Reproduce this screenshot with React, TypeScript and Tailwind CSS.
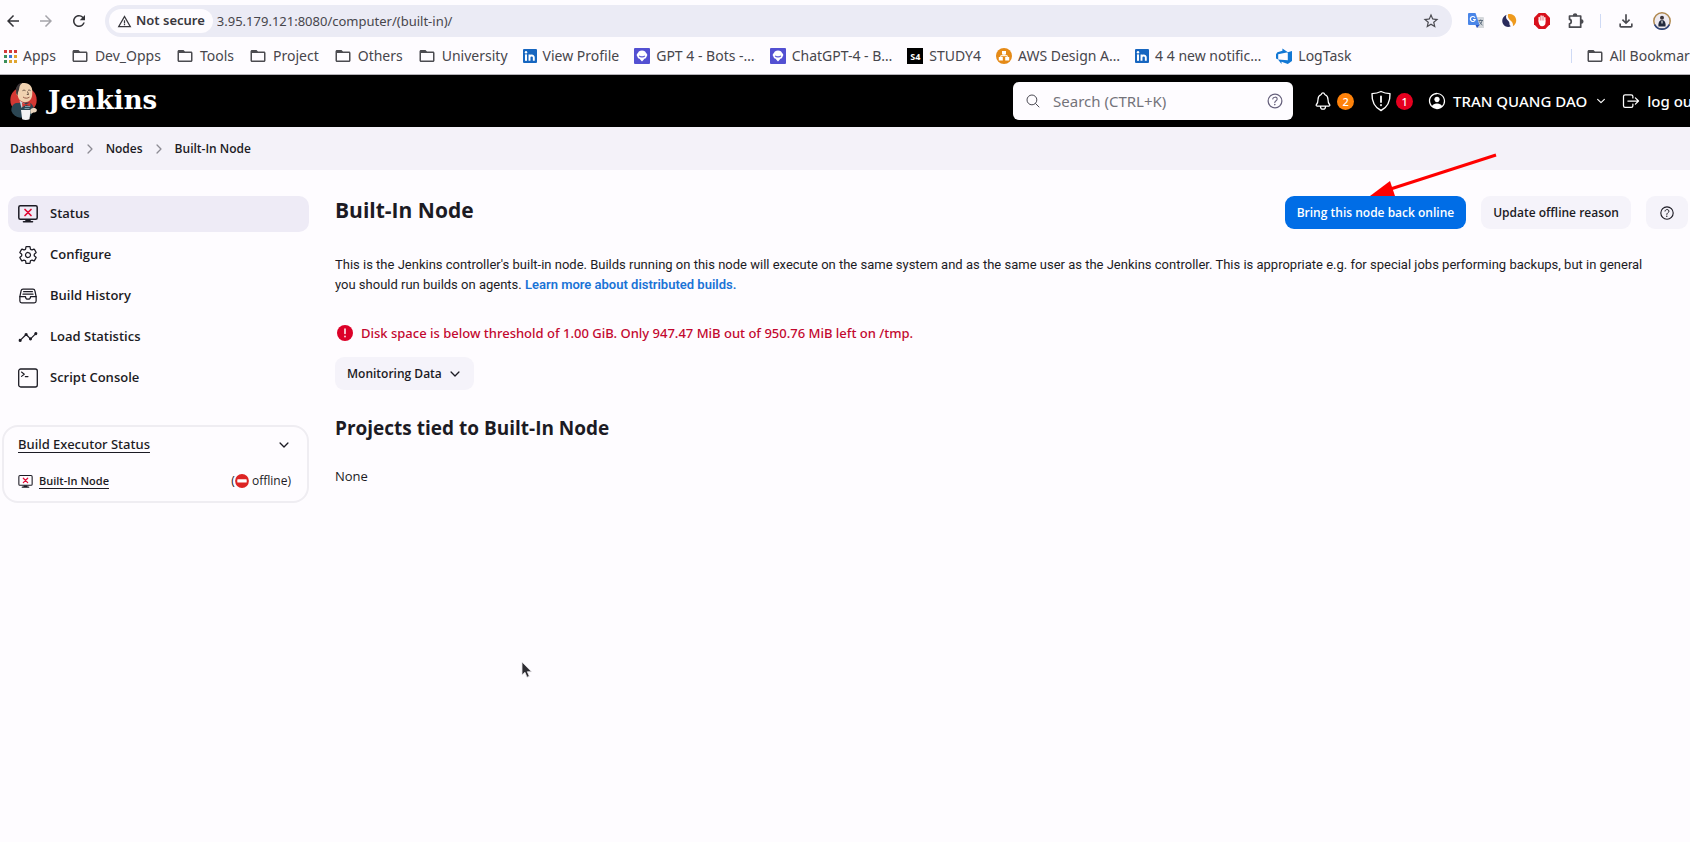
import type { ReactNode } from "react";
import {
  IoAnalytics,
  IoChevronDown,
  IoChevronForward,
  IoFileTrayFullOutline,
  IoHelpCircleOutline,
  IoLogOutOutline,
  IoNotificationsOutline,
  IoPersonCircleOutline,
  IoSearchOutline,
  IoSettingsOutline,
} from "react-icons/io5";
import {
  MdArrowBack,
  MdArrowForward,
  MdFolderOpen,
  MdOutlineFileDownload,
  MdRefresh,
  MdStarBorder,
  MdWarningAmber,
} from "react-icons/md";

const dots = ["#d33b3b", "#d33b3b", "#d33b3b", "#3c8f5a", "#3b78d8", "#e0a530", "#3c8f5a", "#e0a530", "#e0a530"];

const AppsIcon = () => (
  <svg viewBox="0 0 13 13" className="size-[13px]">
    {dots.map((c, i) => (
      <rect key={i} x={(i % 3) * 5} y={Math.floor(i / 3) * 5} width="3" height="3" fill={c} />
    ))}
  </svg>
);

const Folder = () => <MdFolderOpen className="size-[18px] text-[#4b4b50]" />;

const LinkedIn = () => (
  <svg viewBox="0 0 14 14" className="size-3.5">
    <rect width="14" height="14" rx="1" fill="#1766c0" />
    <rect x="2" y="5.4" width="2" height="6.4" fill="#fff" />
    <circle cx="3" cy="3.2" r="1.2" fill="#fff" />
    <path d="M6.5 11.8V5.4M6.5 8.6c0-2.6 4.3-3 4.3 0v3.2" fill="none" stroke="#fff" strokeWidth="1.9" />
  </svg>
);

const Poe = () => (
  <svg viewBox="0 0 16 16" className="size-4">
    <rect width="16" height="16" rx="1" fill="#5350d2" />
    <path d="M8 2.500c2.300 0 3.700 1.100 4 2.500 1.500.7 1.700 2.800.5 3.700-.2 1.200-1 1.900-2.100 2-.5 1-1.400 1.700-2.400 2.700-1-1-1.900-1.700-2.400-2.700-1.100-.1-1.900-.8-2.100-2C2.300 7.800 2.500 5.700 4 5c.3-1.400 1.700-2.500 4-2.500z" fill="#fff" />
    <path d="M5.200 7.800c1.400 1.500 4.200 1.500 5.600 0" fill="none" stroke="#5350d2" strokeWidth="1.200" />
  </svg>
);

const Study = () => (
  <span className="grid h-4 w-4 place-items-center bg-black text-[9px] leading-none font-bold text-white">S4</span>
);

const Aws = () => (
  <svg viewBox="0 0 16 16" className="size-4">
    <circle cx="8" cy="8" r="8" fill="#e58a17" />
    <path d="M6 3h4v3.500H6zM2.800 9h4v3.500h-4zM9.200 9h4v3.500h-4z" fill="#fff" />
    <path d="M8 6v2M4.800 9V7.700h6.400V9" fill="none" stroke="#fff" strokeWidth="1" />
  </svg>
);

const Azure = () => (
  <svg viewBox="0 0 16 16" className="size-4">
    <path d="M16 3v10l-4.200 3-6.300-2.200V16L2 11.500l9.800.8V4.200zM11.900 4.300 6.400.500v2.300L1.400 4.300 0 6.200v4.200l2.200 1V6.200z" fill="#1278d4" />
  </svg>
);

const bookmarks: { label: string; icon: ReactNode }[] = [
  { label: "Apps", icon: <AppsIcon /> },
  { label: "Dev_Opps", icon: <Folder /> },
  { label: "Tools", icon: <Folder /> },
  { label: "Project", icon: <Folder /> },
  { label: "Others", icon: <Folder /> },
  { label: "University", icon: <Folder /> },
  { label: "View Profile", icon: <LinkedIn /> },
  { label: "GPT 4 - Bots -…", icon: <Poe /> },
  { label: "ChatGPT-4 - B…", icon: <Poe /> },
  { label: "STUDY4", icon: <Study /> },
  { label: "AWS Design A…", icon: <Aws /> },
  { label: "4 4 new notific…", icon: <LinkedIn /> },
  { label: "LogTask", icon: <Azure /> },
];

const TranslateIcon = () => (
  <svg viewBox="0 0 16 16" className="size-4">
    <path d="M6 4h9a1 1 0 0 1 1 1v10H9z" fill="#d5d8dc" />
    <path d="M0 1a1 1 0 0 1 1-1h6.500L11.500 12H1a1 1 0 0 1-1-1z" fill="#4a86e8" />
    <path d="M7.500 12h4L9 15z" fill="#2a56c6" />
    <path d="M7 4.700A2.500 2.500 0 1 0 7.300 6.500H5" fill="none" stroke="#fff" strokeWidth="1.200" />
    <path d="M10.500 7.500H15M12.700 6.500v1M14 7.500c-.3 2-1.300 3.300-2.500 4.300M11.500 8.500c.6 1.600 1.700 2.800 3 3.600" fill="none" stroke="#5f6f80" />
  </svg>
);

const SwirlIcon = () => (
  <svg viewBox="0 0 16 16" className="size-4">
    <path d="M5.500 1.800C.5 4 .3 9.500 3 12.300c2 2 5 2.200 7 .8C7.500 12.300 9.400 10 7.400 8 5.200 6.200 4.400 4.500 5.500 1.800z" fill="#2a2b5c" />
    <path d="M7 1.300c3-.8 6.200.4 7.600 3.400 1.500 3.300.2 6.900-2.800 8.500.6-2.600-.3-4-2.300-5.800C7.600 5.800 6.400 4 7 1.300z" fill="#ee9a1e" />
  </svg>
);

const BlockIcon = () => (
  <svg viewBox="0 0 16 16" className="size-4">
    <path d="M4.700 0h6.600L16 4.700v6.600L11.300 16H4.700L0 11.300V4.700z" fill="#d8101c" />
    <path d="M5.200 8V4.500M7.100 7.500V3M9 7.500V3.300M10.800 8V4.800" stroke="#fff" strokeWidth="1.400" strokeLinecap="round" />
    <path d="M4.500 7.500h7v2.300c0 2-1.300 3.500-3.400 3.500-2.300 0-3.600-2-3.600-5.800z" fill="#fff" />
  </svg>
);

const PuzzleIcon = () => (
  <svg viewBox="0 0 18 18" className="size-[18px]" fill="none" stroke="#4a4a50" strokeWidth="1.700" strokeLinejoin="round">
    <path d="M2.500 4h11.200v11.200H2.500v-3.400c2.300-.2 2.300-4.200 0-4.400z" />
    <path d="M6.700 3.400a1.400 1.400 0 0 1 2.800 0zM14.300 8.200a1.400 1.400 0 0 1 0 2.800z" fill="#4a4a50" />
  </svg>
);

const Avatar = () => (
  <svg viewBox="0 0 18 18" className="size-[18px]">
    <circle cx="9" cy="9" r="8.200" fill="#eeeaf0" stroke="#b0894f" strokeWidth="1.500" />
    <path d="M1.600 12.500a8.200 8.200 0 0 0 14.800 0" fill="none" stroke="#2d4580" strokeWidth="1.700" />
    <path d="M5.500 14.500c-.5-4 1-6.500 3.500-6.500s4 2.500 3.500 6.500z" fill="#232a3d" />
    <circle cx="9" cy="5.800" r="2" fill="#3b3338" />
    <path d="M9 8.500v3" stroke="#fff" />
  </svg>
);

const JenkinsLogo = () => (
  <svg viewBox="0 0 28 38" className="h-[38px] w-7 shrink-0">
    <ellipse cx="13.500" cy="18" rx="13.200" ry="13" fill="#d33833" />
    <path d="M6 21c-3 1-5 4-4.600 8 1.300 3.500 4.500 6 9 6.800l9.600-1 4-6.300c0-4-1.800-7-5-8z" fill="#2b4653" />
    <path d="M6.200 8.500C6.500 3.500 10 .8 14.500 1c5 .2 8 3.500 7.800 8.500-.1 3 .2 6.500-2.600 9-2.200 2-6.500 2.300-9 .3-2.300-1.800-2.700-3.700-2.900-5.300-1.600-.8-2-3-1.600-5z" fill="#f0d2b0" />
    <path d="M6.100 9.500C5.500 4.500 8.500 1.200 12.500.800c-1.800 1.300-3 3-3.200 5.200-.2 1.700-.7 3-1.300 4.200l-.4 3C6.300 12.500 6 11 6.100 9.500z" fill="#3a3436" />
    <path d="M12.500 8.700c1-.7 2-.7 3 0M18 8.500c.8-.6 1.700-.5 2.500.1M17.500 9.500l1 3h-1.700" fill="none" stroke="#49362c" strokeWidth=".8" />
    <path d="M13 15c2 1.500 4.500 1.600 6.500.1" fill="none" stroke="#8c4f3e" strokeWidth=".9" />
    <path d="M9.500 18.500 15 22l-3.500 4z" fill="#c9d6dc" />
    <path d="m12 20.500 4 2 4.200-2.300.5 4.300-4.300-1.500-4 2z" fill="#d33833" />
    <path d="M15 24.500h5M14.500 26.500h5" stroke="#7b98a5" />
    <path d="M11 28h9.500l-1 9.200c-2 .9-5.300.9-7.300 0z" fill="#f4f4f4" />
    <path d="M20.500 27.500c2-2 5.500-2 6.300.1.500 2-1.500 3.400-3.500 2.900l-2.700 1.400z" fill="#e9d4bd" />
  </svg>
);

const Shield = () => (
  <svg viewBox="0 0 22 22" className="size-[22px] shrink-0" fill="none" stroke="currentColor" strokeWidth="1.400" strokeLinecap="round" strokeLinejoin="round">
    <path d="M11 1.500c-2.500 1.300-5.500 2-9 2.100C1.700 11.500 4 17 11 20.500c7-3.500 9.300-9 9-16.900-3.500-.1-6.500-.8-9-2.100z" />
    <path d="M11 6.500v5.500M11 15v.3" strokeWidth="1.800" />
  </svg>
);

const NodeOffline = ({ className }: { className: string }) => (
  <svg viewBox="0 0 20 18" className={className} fill="none" strokeLinecap="round" strokeLinejoin="round">
    <rect x="0.800" y="0.800" width="18.400" height="13.400" rx="1.500" stroke="#1c1b24" strokeWidth="1.500" />
    <path d="M5.500 16.800h9M8 15.500h4" stroke="#1c1b24" strokeWidth="1.600" />
    <path d="m7 4.500 6 6m0-6-6 6" stroke="#e00b35" strokeWidth="1.700" />
  </svg>
);

const NoEntry = () => (
  <svg viewBox="0 0 14 14" className="size-3.5">
    <circle cx="7" cy="7" r="6.900" fill="#dd2424" />
    <rect x="2.300" y="5.300" width="9.400" height="3.200" rx=".6" fill="#fff" />
  </svg>
);

const tasks: { label: string; icon: ReactNode }[] = [
  { label: "Status", icon: <NodeOffline className="h-[18px] w-5" /> },
  { label: "Configure", icon: <IoSettingsOutline className="size-5" /> },
  { label: "Build History", icon: <IoFileTrayFullOutline className="size-5" /> },
  { label: "Load Statistics", icon: <IoAnalytics className="size-5" /> },
  {
    label: "Script Console",
    icon: (
      <svg viewBox="0 0 20 20" className="size-5" fill="none" stroke="currentColor" strokeWidth="1.300" strokeLinecap="round" strokeLinejoin="round">
        <rect x="0.700" y="1" width="18.600" height="18" rx="2" />
        <path d="m3.500 4 2.800 2.200-2.800 2.200M7.300 8.600h2.700" strokeWidth="1.100" />
      </svg>
    ),
  },
];

function Browser() {
  return (
    <div className="border-b border-[#b5b2b8] font-['Noto_Sans',sans-serif] text-[#47464c]">
      <div className="flex h-[38px] items-center pt-1 pl-1">
        <button aria-label="Back" className="w-[18px]"><MdArrowBack className="size-[18px] text-[#333338]" /></button>
        <button aria-label="Forward" className="ml-[15px] w-[18px]"><MdArrowForward className="size-[18px] text-[#a5a4aa]" /></button>
        <button aria-label="Reload" className="ml-[15px] w-[18px]"><MdRefresh className="size-[18px] text-[#333338]" /></button>
        <div className="ml-[17px] flex h-8 flex-1 items-center rounded-full bg-[#ebebf5] pr-3 pl-1">
          <button className="flex h-6 shrink-0 items-center gap-1 rounded-full bg-[#fefcff] px-2 text-[13px] font-semibold whitespace-nowrap text-[#38373d]">
            <MdWarningAmber className="size-[15px]" />
            Not secure
          </button>
          <input
            aria-label="Address"
            defaultValue="3.95.179.121:8080/computer/(built-in)/"
            className="ml-1 h-6 min-w-0 flex-1 bg-transparent text-[13px] outline-none"
          />
          <button aria-label="Bookmark this page"><MdStarBorder className="size-[18px] text-[#4a4a50]" /></button>
        </div>
        <div className="flex items-center gap-[17px] pr-[19px] pl-4">
          <button aria-label="Translate"><TranslateIcon /></button>
          <button aria-label="Swirl extension"><SwirlIcon /></button>
          <button aria-label="Content blocker"><BlockIcon /></button>
          <button aria-label="Extensions"><PuzzleIcon /></button>
          <span className="mx-[-2px] h-3.5 w-px bg-[#cfdaf5]" />
          <button aria-label="Downloads"><MdOutlineFileDownload className="size-5 text-[#4a4a50]" /></button>
          <button aria-label="Profile"><Avatar /></button>
        </div>
      </div>
      <nav className="flex h-9 items-center overflow-hidden pl-1 text-sm whitespace-nowrap">
        <div className="flex items-center gap-[15px]">
          {bookmarks.map((b) => (
            <a key={b.label} href="#" className="flex shrink-0 items-center gap-1.5">
              {b.icon}
              {b.label}
            </a>
          ))}
        </div>
        <div className="-mr-3.5 ml-auto flex shrink-0 items-center gap-3.5">
          <span className="h-3.5 w-px bg-[#cfdaf5]" />
          <a href="#" className="flex items-center gap-1.5"><Folder />All Bookmarks</a>
        </div>
      </nav>
    </div>
  );
}

function Header() {
  return (
    <header className="flex h-[52px] items-center overflow-hidden bg-black pl-2.5 font-['Noto_Sans',sans-serif] whitespace-nowrap text-white">
      <a href="#" className="flex items-center gap-2.5">
        <JenkinsLogo />
        <span className="pb-0.5 font-['DejaVu_Serif',serif] text-[26px] leading-8 font-bold">Jenkins</span>
      </a>
      <div className="ml-auto flex h-[38px] w-[280px] shrink-0 items-center rounded-md bg-[#fefcff] pr-2 pl-3 text-[#4a4952]">
        <IoSearchOutline className="size-4" />
        <input
          aria-label="Search"
          placeholder="Search (CTRL+K)"
          className="ml-3 h-8 min-w-0 flex-1 bg-transparent text-[15px] outline-none placeholder:text-[#74737a]"
        />
        <IoHelpCircleOutline className="size-5 text-[#66607c]" />
      </div>
      <div className="-mr-2 flex shrink-0 items-center text-[15px] font-medium">
        <button aria-label="Notifications" className="ml-5 flex items-center gap-1">
          <IoNotificationsOutline className="size-5" />
          <span className="grid size-[17px] place-items-center rounded-full bg-[#fe820a] text-[11px] leading-none">2</span>
        </button>
        <button aria-label="Security warnings" className="ml-4 flex items-center gap-1">
          <Shield />
          <span className="grid size-[17px] place-items-center rounded-full bg-[#e6001f] text-[11px] leading-none">1</span>
        </button>
        <a href="#" className="ml-3.5 flex items-center gap-1.5">
          <IoPersonCircleOutline className="size-5" />
          TRAN QUANG DAO
        </a>
        <IoChevronDown className="ml-2 size-3" />
        <a href="#" className="ml-3.5 flex items-center gap-1.5">
          <IoLogOutOutline className="size-5" />
          log out
        </a>
      </div>
    </header>
  );
}

export default function App() {
  return (
    <div className="relative min-h-screen overflow-hidden bg-[#fefcff] font-['Open_Sans',sans-serif] text-[#1c1b24]">
      <Browser />
      <Header />
      <nav aria-label="Breadcrumb" className="flex h-[43px] items-center gap-[9px] bg-[#f4f2f9] px-2.5 text-xs font-semibold">
        <a href="#">Dashboard</a>
        <IoChevronForward className="size-3.5 text-[#8d8c94]" />
        <a href="#">Nodes</a>
        <IoChevronForward className="size-3.5 text-[#8d8c94]" />
        <a href="#">Built-In Node</a>
      </nav>

      <div className="flex pt-[26px]">
        <aside className="w-[309px] shrink-0">
          <nav className="flex flex-col gap-[5px] pl-2 text-[13px] font-semibold">
            {tasks.map((t, i) => (
              <a
                key={t.label}
                href="#"
                className={
                  i === 0
                    ? "flex h-9 items-center gap-3 rounded-[10px] bg-[#eeebf6] px-2.5"
                    : "flex h-9 items-center gap-3 rounded-[10px] px-2.5"
                }
              >
                {t.icon}
                {t.label}
              </a>
            ))}
          </nav>
          <section className="mt-[29px] ml-0.5 rounded-2xl border-2 border-[#efedf2] px-3.5 pt-1.5 pb-2.5">
            <div className="flex h-6 items-center justify-between">
              <a href="#" className="font-['Noto_Sans',sans-serif] text-[13px] font-medium underline underline-offset-[3px]">Build Executor Status</a>
              <button aria-label="Collapse" className="mr-0.5"><IoChevronDown className="size-3.5" /></button>
            </div>
            <div className="mt-3.5 flex h-5 items-center text-xs">
              <NodeOffline className="h-[13px] w-[15px]" />
              <a href="#" className="ml-1.5 text-[11px] font-semibold underline underline-offset-[3px]">Built-In Node</a>
              <span className="mr-0.5 ml-auto flex items-center">(<NoEntry />&nbsp;offline)</span>
            </div>
          </section>
        </aside>

        <main className="min-w-0 flex-1 pl-[26px] text-[13px] leading-5">
          <div className="flex items-start justify-between">
            <h1 className="text-[21px] leading-7 font-bold">Built-In Node</h1>
            <div className="relative flex gap-[15px] pr-0.5 text-xs font-semibold whitespace-nowrap">
              <button className="h-[33px] rounded-[9px] bg-[#006de6] px-3 text-white">Bring this node back online</button>
              <button className="h-[33px] rounded-[9px] bg-[#f5f3fa] px-3">Update offline reason</button>
              <button aria-label="Help" className="h-[33px] rounded-[9px] bg-[#f5f3fa] px-3"><IoHelpCircleOutline className="size-[18px]" /></button>
              <svg viewBox="0 0 128 44" className="pointer-events-none absolute -top-[43px] right-[193px] h-11 w-32" fill="none">
                <path d="M127 2 20 36.500" stroke="#ff0000" strokeWidth="3" />
                <path d="M1 43 21 28l5 15z" fill="#ff0000" />
              </svg>
            </div>
          </div>
          <p className="mt-[26px] pr-8 font-['Roboto',sans-serif]">
            This is the Jenkins controller's built-in node. Builds running on this node will execute on the same system and as the same user as the Jenkins controller. This is appropriate e.g. for special jobs performing backups, but in general you should run builds on agents.{" "}
            <a href="#" className="font-semibold text-[#1a73d6]">Learn more about distributed builds.</a>
          </p>
          <p className="mt-7 flex items-center gap-2 pl-0.5 font-['Noto_Sans',sans-serif] font-medium text-[#c3082f]">
            <svg viewBox="0 0 16 16" className="size-4">
              <circle cx="8" cy="8" r="8" fill="#dc0028" />
              <path d="M8 4v4.600M8 11.300v.4" stroke="#fff" strokeWidth="1.500" strokeLinecap="round" />
            </svg>
            Disk space is below threshold of 1.00 GiB. Only 947.47 MiB out of 950.76 MiB left on /tmp.
          </p>
          <button className="mt-3.5 flex h-[33px] items-center gap-1.5 rounded-[9px] bg-[#f5f3fa] px-3 text-xs font-semibold">
            Monitoring Data
            <IoChevronDown className="size-3.5" />
          </button>
          <h2 className="mt-[22px] text-[19px] leading-8 font-bold">Projects tied to Built-In Node</h2>
          <p className="mt-[22px]">None</p>
        </main>
      </div>

      <svg viewBox="0 0 12 18" className="pointer-events-none absolute top-[661px] left-[521px] h-[18px] w-3">
        <path d="M1 1v13l3-2.700 2 5 2.300-1-2-4.600h4.200z" fill="#2d2c31" stroke="#e8e6ea" strokeWidth=".8" />
      </svg>
    </div>
  );
}
